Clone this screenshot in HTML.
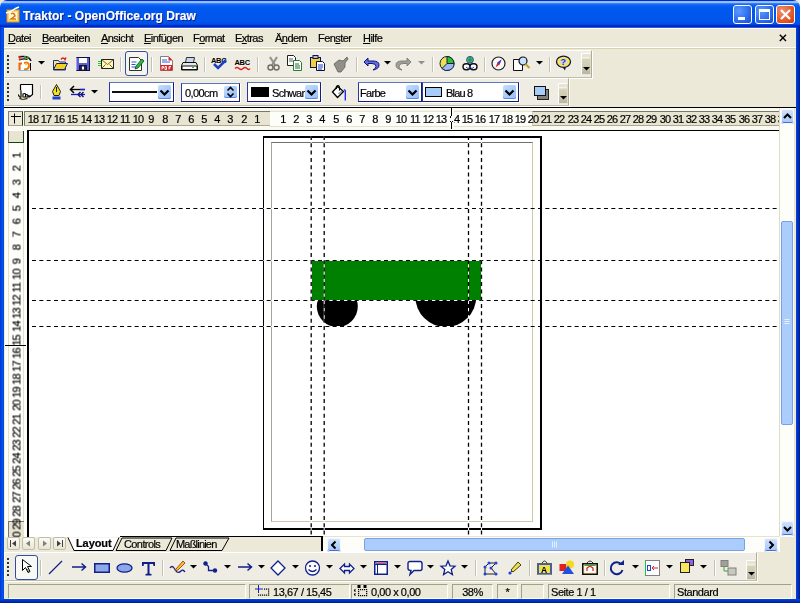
<!DOCTYPE html><html><head><meta charset="utf-8"><style>
html,body{margin:0;padding:0}
body{width:800px;height:603px;overflow:hidden;position:relative;background:#ECE9D8;font-family:"Liberation Sans",sans-serif;font-size:11px;color:#000}
.a{position:absolute;box-sizing:border-box}
.t{position:absolute;white-space:nowrap;line-height:13px;font-size:11px;letter-spacing:-0.55px;-webkit-text-stroke:0.2px currentColor;will-change:transform}
svg.a{overflow:visible}
</style></head><body>

<div class="a" style="left:0px;top:0px;width:800px;height:27px;background:linear-gradient(to bottom,#0018C0 0px,#0A30D0 0.8px,#8CC0FF 1.5px,#A8D2FF 2.3px,#3A84FA 3.3px,#0A60F2 5px,#0058EE 8px,#0055EC 20px,#0050E6 24px,#0030D0 25.5px,#0018C0 27px);border-radius:7px 7px 0 0"></div>
<div class="a" style="left:0px;top:27px;width:4px;height:576px;background:linear-gradient(to right,#0030D0,#0055EA 2px,#0048E0 4px)"></div>
<div class="a" style="left:796px;top:27px;width:4px;height:576px;background:linear-gradient(to right,#0048E0,#0030C0 2px,#001A90 4px)"></div>
<div class="a" style="left:0px;top:599px;width:800px;height:4px;background:linear-gradient(to bottom,#0048E0,#0030C0 2px,#001A90 4px)"></div>
<svg class="a" style="left:6px;top:7px;" width="14" height="15" viewBox="0 0 14 15"><rect x="1" y="3" width="12" height="12" fill="#F8D860" stroke="#E09020"/><rect x="3" y="5" width="8" height="8" fill="#FFF8E0"/><path d="M5 7 q3 -2 4 2 l-4 3 h5" stroke="#E07010" stroke-width="1.5" fill="none"/><path d="M0 6 q4 -1 7 -3 q3 -2 6 -3" stroke="#fff" stroke-width="1.5" fill="none"/></svg>
<div class="t" style="left:23px;top:10px;font-size:12px;font-weight:bold;color:#fff;letter-spacing:0.05px;text-shadow:1px 1px 0 #0A1E8C">Traktor - OpenOffice.org Draw</div>
<div class="a" style="left:733px;top:5px;width:19px;height:19px;border:1px solid #fff;border-radius:3px;background:radial-gradient(circle at 30% 30%,#5A9AFF,#2663E8 70%,#1E50D0)"><div class="a" style="left:4px;top:11px;width:7px;height:3px;background:#fff"></div></div>
<div class="a" style="left:755px;top:5px;width:19px;height:19px;border:1px solid #fff;border-radius:3px;background:radial-gradient(circle at 30% 30%,#5A9AFF,#2663E8 70%,#1E50D0)"><div class="a" style="left:3px;top:3px;width:11px;height:11px;border:1px solid #fff;border-top-width:3px"></div></div>
<div class="a" style="left:776px;top:5px;width:19px;height:19px;border:1px solid #fff;border-radius:3px;background:radial-gradient(circle at 30% 30%,#F09070,#E0501E 70%,#C83A10)"><svg class="a" style="left:3px;top:3px" width="11" height="11"><path d="M1 1L10 10M10 1L1 10" stroke="#fff" stroke-width="2.2"/></svg></div>
<div class="a" style="left:4px;top:27px;width:792px;height:1px;background:#3060D8"></div>
<div class="a" style="left:4px;top:28px;width:792px;height:1px;background:#fff"></div>
<div class="a" style="left:4px;top:47px;width:792px;height:1px;background:#fff"></div>
<div class="a" style="left:4px;top:48px;width:792px;height:1px;background:#D8D2B0"></div>
<div class="t" style="left:8px;top:32px;"><u>D</u>atei</div>
<div class="t" style="left:42px;top:32px;"><u>B</u>earbeiten</div>
<div class="t" style="left:101px;top:32px;"><u>A</u>nsicht</div>
<div class="t" style="left:144px;top:32px;"><u>E</u>infügen</div>
<div class="t" style="left:193px;top:32px;">F<u>o</u>rmat</div>
<div class="t" style="left:235px;top:32px;">E<u>x</u>tras</div>
<div class="t" style="left:275px;top:32px;">Ä<u>n</u>dern</div>
<div class="t" style="left:318px;top:32px;">Fen<u>s</u>ter</div>
<div class="t" style="left:363px;top:32px;"><u>H</u>ilfe</div>
<svg class="a" style="left:778px;top:33px;" width="10" height="10" viewBox="0 0 10 10"><path d="M1.8 1.8L8 8M8 1.8L1.8 8" stroke="#000" stroke-width="1.4"/></svg>
<div class="a" style="left:4px;top:50px;width:588px;height:28px;background:#EFEDE3;border-top:1px solid #fff;border-left:1px solid #fff;border-right:1px solid #B0AC98;border-bottom:1px solid #C0BCA8;box-shadow:1px 1px 0 #fff"></div>
<div class="a" style="left:4px;top:78px;width:565px;height:28px;background:#EFEDE3;border-top:1px solid #fff;border-left:1px solid #fff;border-right:1px solid #B0AC98;border-bottom:1px solid #C0BCA8;box-shadow:1px 1px 0 #fff"></div>
<div class="a" style="left:4px;top:107px;width:792px;height:1px;background:#000"></div>
<div class="a" style="left:7px;top:55px;width:2px;height:2px;background:#2A3A20"></div>
<div class="a" style="left:7px;top:59px;width:2px;height:2px;background:#2A3A20"></div>
<div class="a" style="left:7px;top:63px;width:2px;height:2px;background:#2A3A20"></div>
<div class="a" style="left:7px;top:67px;width:2px;height:2px;background:#2A3A20"></div>
<div class="a" style="left:7px;top:71px;width:2px;height:2px;background:#2A3A20"></div>
<div class="a" style="left:7px;top:83px;width:2px;height:2px;background:#2A3A20"></div>
<div class="a" style="left:7px;top:87px;width:2px;height:2px;background:#2A3A20"></div>
<div class="a" style="left:7px;top:91px;width:2px;height:2px;background:#2A3A20"></div>
<div class="a" style="left:7px;top:95px;width:2px;height:2px;background:#2A3A20"></div>
<div class="a" style="left:7px;top:99px;width:2px;height:2px;background:#2A3A20"></div>
<div class="a" style="left:581px;top:53px;width:10px;height:22px;border:1px solid #fff;border-right-color:#E0DCC8;border-bottom-color:#E8E6D8;background:linear-gradient(to bottom,#E6E4D4 0,#E6E4D4 3px,#F4F2E8 3px,#F4F2E8 4px,#D8D4BC 5px,#D0CCB4 60%,#B8B4A0 100%)"></div>
<svg class="a" style="left:583px;top:67px;" width="7" height="4" viewBox="0 0 7 4"><path d="M0 0h7l-3.5 3.5z" fill="#000"/></svg>
<div class="a" style="left:558px;top:83px;width:10px;height:21px;border:1px solid #fff;border-right-color:#E0DCC8;border-bottom-color:#E8E6D8;background:linear-gradient(to bottom,#E6E4D4 0,#E6E4D4 3px,#F4F2E8 3px,#F4F2E8 4px,#D8D4BC 5px,#D0CCB4 60%,#B8B4A0 100%)"></div>
<svg class="a" style="left:560px;top:96px;" width="7" height="4" viewBox="0 0 7 4"><path d="M0 0h7l-3.5 3.5z" fill="#000"/></svg>
<svg class="a" style="left:17px;top:55px;" width="15" height="16" viewBox="0 0 15 16"><path d="M1 5.5h12.5v10h-12.5z" fill="#fff"/><path d="M13.5 8v7.5" stroke="#000" stroke-width="1"/><path d="M2.5 15V8.5h2.5" stroke="#E86A10" stroke-width="2.2" fill="none"/><path d="M7 8q5-1.5 5 2.5t-5 4" stroke="#E8800A" stroke-width="2" fill="none"/><path d="M8 9.5l2 0" stroke="#F8D020" stroke-width="1.5"/><path d="M2 1.8q6-1 9 0.7 2 1 3 3.5" stroke="#101010" stroke-width="1.5" fill="none"/><path d="M2.5 4.5q5-1.2 8 -0.2" stroke="#101010" stroke-width="1.3" fill="none"/><circle cx="2.5" cy="2" r="1.2" fill="#E02010"/><circle cx="2.8" cy="4.6" r="1.1" fill="#E02010"/><circle cx="8" cy="1.8" r="1" fill="#20A030"/><circle cx="11" cy="2.6" r="1" fill="#20A030"/><path d="M1.5 15.5h11" stroke="#90B0E0" stroke-width="1"/></svg>
<svg class="a" style="left:38px;top:61px;" width="7" height="4" viewBox="0 0 7 4"><path d="M0 0h7l-3.5 3.5z" fill="#000"/></svg>
<svg class="a" style="left:52px;top:57px;" width="16" height="14" viewBox="0 0 16 14"><path d="M1.5 3.5h5l1 1.5h6v8h-12z" fill="#F8E890" stroke="#203080"/><path d="M1.5 12.5l3-6h11l-3 6z" fill="#F0D020" stroke="#102070"/><path d="M9 2.5q2-3 4 0l1-2" stroke="#E02010" stroke-width="1.5" fill="none"/></svg>
<svg class="a" style="left:76px;top:57px;" width="14" height="14" viewBox="0 0 14 14"><rect x="0.5" y="0.5" width="13" height="13" fill="#6060D0" stroke="#101040"/><rect x="3" y="1" width="8" height="5" fill="#fff"/><rect x="3.5" y="8.5" width="7" height="5" fill="#202040" stroke="#101040"/><rect x="6" y="9.5" width="2" height="3" fill="#fff"/><path d="M0.5 0.5v13" stroke="#A0A0FF"/></svg>
<svg class="a" style="left:98px;top:59px;" width="16" height="10" viewBox="0 0 16 10"><rect x="3.5" y="0.5" width="12" height="9" fill="#FFF8C0" stroke="#202020"/><path d="M3.5 0.5l6 5 6-5M3.5 9.5l4-4M15.5 9.5l-4-4" stroke="#806020" fill="none"/><path d="M0 2.5h3M0 4.5h3M0 6.5h3" stroke="#20D020"/></svg>
<div class="a" style="left:120px;top:57px;width:1px;height:15px;background:#C5C2B2"></div>
<div class="a" style="left:121px;top:57px;width:1px;height:15px;background:#fff"></div>
<div class="a" style="left:125px;top:51px;width:23px;height:25px;border:1px solid #2F4F9F;border-radius:3px;background:#F5F4EE"></div>
<svg class="a" style="left:128px;top:56px;" width="16" height="16" viewBox="0 0 16 16"><path d="M1.5 1.5h9l3 3v10h-12z" fill="#fff" stroke="#303030"/><path d="M3.5 6h5M3.5 8.5h4M3.5 11h4" stroke="#3050C0"/><path d="M7 13l1-3 6-7 2 2-6 7z" fill="#20C040" stroke="#104010" stroke-width="0.8"/></svg>
<div class="a" style="left:151px;top:57px;width:1px;height:15px;background:#C5C2B2"></div>
<div class="a" style="left:152px;top:57px;width:1px;height:15px;background:#fff"></div>
<svg class="a" style="left:160px;top:56px;" width="13" height="15" viewBox="0 0 13 15"><path d="M0.5 0.5h8l4 4v10h-12z" fill="#fff" stroke="#808080"/><path d="M8.5 0.5v4h4" fill="#E02020"/><path d="M2 4h5M2 6h8" stroke="#3060E0"/><rect x="0.5" y="9" width="12" height="5.5" fill="#D82020"/><path d="M2 10.5v3M2 10.5h1.5v1.5h-1.5M5 10.5v3h1.5v-3zM9 10.5h2M9 10.5v3M9 12h1.5" stroke="#fff" stroke-width="0.9" fill="none"/></svg>
<svg class="a" style="left:181px;top:57px;" width="17" height="14" viewBox="0 0 17 14"><path d="M5.5 0.5h8l-1 5h-8z" fill="#C8D8F0" stroke="#303030"/><path d="M2 5.5h13l1.5 3v4.5h-16v-4.5z" fill="#E8E8E8" stroke="#101010"/><rect x="1" y="9" width="15" height="3.5" fill="#fff" stroke="#101010"/><rect x="11" y="10" width="2" height="1" fill="#20C020"/></svg>
<div class="a" style="left:204px;top:57px;width:1px;height:15px;background:#C5C2B2"></div>
<div class="a" style="left:205px;top:57px;width:1px;height:15px;background:#fff"></div>
<svg class="a" style="left:211px;top:56px;" width="16" height="14" viewBox="0 0 16 14"><text x="0" y="6.5" font-family="Liberation Sans" font-weight="bold" font-size="7.5" fill="#000" letter-spacing="-0.3">ABC</text><path d="M3 8l4 4 8-8" stroke="#2040C0" stroke-width="2.5" fill="none"/></svg>
<svg class="a" style="left:234px;top:58px;" width="16" height="12" viewBox="0 0 16 12"><text x="0.5" y="7" font-family="Liberation Sans" font-weight="bold" font-size="7.5" fill="#000" letter-spacing="-0.3">ABC</text><path d="M1 10.5q2-2 4 0t4 0 4 0 3 0" stroke="#E02020" stroke-width="1.3" fill="none"/></svg>
<div class="a" style="left:257px;top:57px;width:1px;height:15px;background:#C5C2B2"></div>
<div class="a" style="left:258px;top:57px;width:1px;height:15px;background:#fff"></div>
<svg class="a" style="left:267px;top:56px;" width="13" height="15" viewBox="0 0 13 15"><path d="M3 1l5 8M10 1l-5 8" stroke="#909088" stroke-width="2"/><circle cx="3.5" cy="11.5" r="2.5" fill="none" stroke="#707068" stroke-width="1.5"/><circle cx="9.5" cy="11.5" r="2.5" fill="none" stroke="#707068" stroke-width="1.5"/></svg>
<svg class="a" style="left:287px;top:55px;" width="16" height="16" viewBox="0 0 16 16"><path d="M0.5 0.5h6l2 2v8h-8z" fill="#fff" stroke="#202020"/><path d="M2 4h4M2 6h4" stroke="#606060"/><path d="M6.5 5.5h6l2 2v8h-8z" fill="#fff" stroke="#208030"/><path d="M8 9h4M8 11h5M8 13h5" stroke="#306040"/></svg>
<svg class="a" style="left:310px;top:55px;" width="16" height="16" viewBox="0 0 16 16"><rect x="0.5" y="2.5" width="10" height="10" fill="#F0D040" stroke="#101060"/><rect x="3" y="0.5" width="5" height="3" fill="#C0C0C0" stroke="#101060"/><path d="M6.5 6.5h6l2 2v7h-8z" fill="#fff" stroke="#101030"/><path d="M8 10h5M8 12h5M8 14h4" stroke="#2040C0"/></svg>
<svg class="a" style="left:333px;top:56px;" width="16" height="15" viewBox="0 0 16 15"><path d="M1 8l5-4 4 1 4-4 1 2-3 4 0 4-4 5-3 0z" fill="#909088" stroke="#606058" stroke-width="0.8"/></svg>
<div class="a" style="left:356px;top:57px;width:1px;height:15px;background:#C5C2B2"></div>
<div class="a" style="left:357px;top:57px;width:1px;height:15px;background:#fff"></div>
<svg class="a" style="left:363px;top:57px;" width="16" height="13" viewBox="0 0 16 13"><path d="M5 1l-4 4 4 4v-2.5h4q4 0 4 3 0 2-3 3.5 6-1 6-5 0-4-6-4h-5z" fill="#6070E0" stroke="#101080" stroke-width="1"/></svg>
<svg class="a" style="left:384px;top:61px;" width="7" height="4" viewBox="0 0 7 4"><path d="M0 0h7l-3.5 3.5z" fill="#000"/></svg>
<svg class="a" style="left:396px;top:57px;" width="16" height="13" viewBox="0 0 16 13"><path d="M11 1l4 4-4 4v-2.5h-4q-4 0-4 3 0 2 3 3.5-6-1-6-5 0-4 6-4h5z" fill="#A0A098" stroke="#808078" stroke-width="1"/></svg>
<svg class="a" style="left:418px;top:61px;" width="7" height="4" viewBox="0 0 7 4"><path d="M0 0h7l-3.5 3.5z" fill="#909088"/></svg>
<div class="a" style="left:432px;top:57px;width:1px;height:15px;background:#C5C2B2"></div>
<div class="a" style="left:433px;top:57px;width:1px;height:15px;background:#fff"></div>
<svg class="a" style="left:439px;top:56px;" width="16" height="15" viewBox="0 0 16 15"><circle cx="8" cy="7.5" r="7" fill="#F0E050" stroke="#102040"/><path d="M8 7.5V0.5A7 7 0 0 1 15 7.5z" fill="#30C030" stroke="#102040"/><path d="M8 7.5h7A7 7 0 0 1 3 12.5z" fill="#A0B8F0" stroke="#102040"/></svg>
<svg class="a" style="left:462px;top:56px;" width="16" height="15" viewBox="0 0 16 15"><circle cx="8" cy="3.8" r="3.4" fill="#40C040" stroke="#3050B0"/><path d="M6 3.8h4M8 1v5.5" stroke="#3050B0" stroke-width="0.6"/><rect x="1" y="7.8" width="7" height="6" rx="3" fill="#fff" stroke="#101010" stroke-width="1.4"/><rect x="8" y="7.8" width="7" height="6" rx="3" fill="#fff" stroke="#101010" stroke-width="1.4"/><path d="M4 11l2 1.5 2-1.5 2 1.5 2-1.5" stroke="#2040C0" fill="none"/></svg>
<div class="a" style="left:484px;top:57px;width:1px;height:15px;background:#C5C2B2"></div>
<div class="a" style="left:485px;top:57px;width:1px;height:15px;background:#fff"></div>
<svg class="a" style="left:491px;top:56px;" width="15" height="15" viewBox="0 0 15 15"><circle cx="7.5" cy="7.5" r="6.5" fill="#F8F8F8" stroke="#202020" stroke-width="1.2"/><path d="M10.5 3.5l-2 5-4 3 2-5z" fill="#E02020"/><path d="M10.5 3.5l-4 3 2 2z" fill="#2040E0"/></svg>
<svg class="a" style="left:513px;top:56px;" width="17" height="15" viewBox="0 0 17 15"><path d="M0.5 3.5h6l3 3v8h-9z" fill="#fff" stroke="#101010"/><circle cx="10" cy="5" r="4" fill="#C8E0FF" stroke="#101010" stroke-width="1.2"/><path d="M12.5 8l4 4" stroke="#C0A020" stroke-width="2"/></svg>
<svg class="a" style="left:536px;top:61px;" width="7" height="4" viewBox="0 0 7 4"><path d="M0 0h7l-3.5 3.5z" fill="#000"/></svg>
<div class="a" style="left:549px;top:57px;width:1px;height:15px;background:#C5C2B2"></div>
<div class="a" style="left:550px;top:57px;width:1px;height:15px;background:#fff"></div>
<svg class="a" style="left:555px;top:55px;" width="17" height="17" viewBox="0 0 17 17"><ellipse cx="8.5" cy="6.5" rx="7.5" ry="6" fill="#fff" opacity="0.7"/><path d="M7 11.5l3 4 1-4z" fill="#101050"/><ellipse cx="8.5" cy="6.8" rx="7" ry="5.6" fill="#FFF020" stroke="#101060" stroke-width="1.3"/><ellipse cx="8.5" cy="6.8" rx="4.6" ry="3.6" fill="#DCD8CC"/><text x="5.6" y="10.3" font-family="Liberation Sans" font-weight="bold" font-size="9" fill="#1030D0">?</text></svg>
<svg class="a" style="left:17px;top:83px;" width="17" height="17" viewBox="0 0 17 17"><path d="M3.5 1.5h12v10l-3 2.5h-6" fill="#fff" stroke="#000" stroke-width="1.2"/><path d="M3.5 1.5v6" stroke="#000" stroke-width="1.2"/><path d="M4 7.5v7M4 14.5q-2.5-0.5-2.5-3M6 14.5v-3.5q1.5-1 2.5 0v3M8.5 12q1.5-1 2.5 0.5v1.5M11 13q1.5-0.5 2.5 0.5" stroke="#000" stroke-width="1.1" fill="none"/><path d="M2.5 15.5q3 1.5 8 0" stroke="#000" stroke-width="1.1" fill="none"/><path d="M5 15.5h2" stroke="#F0D020" stroke-width="1.2"/></svg>
<div class="a" style="left:40px;top:85px;width:1px;height:14px;background:#C5C2B2"></div>
<div class="a" style="left:41px;top:85px;width:1px;height:14px;background:#fff"></div>
<svg class="a" style="left:51px;top:84px;" width="11" height="16" viewBox="0 0 11 16"><path d="M5.5 0.5l4 7-1.5 4h-5l-1.5-4z" fill="#F0E020" stroke="#202020"/><path d="M5.5 3v5" stroke="#202020"/><rect x="1.5" y="12.5" width="8" height="3" fill="#2040D0"/></svg>
<svg class="a" style="left:69px;top:85px;" width="17" height="13" viewBox="0 0 17 13"><path d="M2 4.5h14" stroke="#000" stroke-width="1.3"/><path d="M11 4.5h5" stroke="#1020D0" stroke-width="1.3"/><path d="M5 1l-3.5 3.5 3.5 3.5" stroke="#000" stroke-width="1.5" fill="none"/><path d="M2 9.5h14" stroke="#1020C0" stroke-width="1.3"/><path d="M14.5 7l-2.5 2.5 2.5 2.5M11.5 7l-2.5 2.5 2.5 2.5" stroke="#101080" stroke-width="1.4" fill="none"/></svg>
<svg class="a" style="left:91px;top:90px;" width="7" height="4" viewBox="0 0 7 4"><path d="M0 0h7l-3.5 3.5z" fill="#000"/></svg>
<div class="a" style="left:109px;top:82px;width:65px;height:20px;border:1px solid #141C80;border-top-color:#5878C0;border-left-color:#2838A0;background:#fff;box-shadow:1px 1px 0 #fff"></div>
<div class="a" style="left:158px;top:85px;width:13px;height:14px;border-radius:2px;background:linear-gradient(135deg,#C8DEFE,#A8CCFC 50%,#9CC0F8);box-shadow:inset 0 -1px 0 #5A88E8"></div>
<svg class="a" style="left:158px;top:85px;" width="13" height="14" viewBox="0 0 13 14"><path d="M2.5 5.5l4 4 4-4" stroke="#000" stroke-width="2.2" fill="none"/></svg>
<div class="a" style="left:112px;top:91px;width:45px;height:2px;background:#101010"></div>
<div class="a" style="left:181px;top:83px;width:59px;height:19px;border:1px solid #141C80;border-top-color:#5878C0;border-left-color:#2838A0;background:#fff;box-shadow:1px 1px 0 #fff"></div>
<div class="a" style="left:224px;top:86px;width:13px;height:12px;border-radius:2px;background:linear-gradient(135deg,#C8DEFE,#A8CCFC 50%,#9CC0F8);box-shadow:inset 0 -1px 0 #5A88E8"></div>
<svg class="a" style="left:224px;top:86px;" width="13" height="12" viewBox="0 0 13 12"><path d="M3.5 4.5l3-3 3 3M3.5 7.5l3 3 3-3" stroke="#000" stroke-width="1.6" fill="none"/></svg>
<div class="t" style="left:185px;top:87px;letter-spacing:-0.6px">0,00cm</div>
<div class="a" style="left:247px;top:82px;width:74px;height:20px;border:1px solid #141C80;border-top-color:#5878C0;border-left-color:#2838A0;background:#fff;box-shadow:1px 1px 0 #fff"></div>
<div class="a" style="left:305px;top:85px;width:13px;height:14px;border-radius:2px;background:linear-gradient(135deg,#C8DEFE,#A8CCFC 50%,#9CC0F8);box-shadow:inset 0 -1px 0 #5A88E8"></div>
<svg class="a" style="left:305px;top:85px;" width="13" height="14" viewBox="0 0 13 14"><path d="M2.5 5.5l4 4 4-4" stroke="#000" stroke-width="2.2" fill="none"/></svg>
<div class="a" style="left:251px;top:87px;width:18px;height:10px;background:#000"></div>
<div class="t" style="left:272px;top:87px;letter-spacing:-0.7px">Schwar</div>
<svg class="a" style="left:331px;top:83px;" width="17" height="17" viewBox="0 0 17 17"><path d="M1.5 9L6.5 3.5 12.5 8.5 6.5 14.5Z" fill="#fff" stroke="#000" stroke-width="1.3"/><path d="M7.5 11l3.5-3" stroke="#90A0B0" stroke-width="1.5"/><path d="M5.5 6q-1-3 1.5-3.5 2-0.3 1.5 5" stroke="#000" stroke-width="1.1" fill="none"/><path d="M13 6.5l1.3 1v10" stroke="#2030F0" stroke-width="1.4" fill="none"/></svg>
<div class="a" style="left:358px;top:82px;width:64px;height:20px;border:1px solid #141C80;border-top-color:#5878C0;border-left-color:#2838A0;background:#fff;box-shadow:1px 1px 0 #fff"></div>
<div class="a" style="left:406px;top:85px;width:13px;height:14px;border-radius:2px;background:linear-gradient(135deg,#C8DEFE,#A8CCFC 50%,#9CC0F8);box-shadow:inset 0 -1px 0 #5A88E8"></div>
<svg class="a" style="left:406px;top:85px;" width="13" height="14" viewBox="0 0 13 14"><path d="M2.5 5.5l4 4 4-4" stroke="#000" stroke-width="2.2" fill="none"/></svg>
<div class="t" style="left:360px;top:87px;letter-spacing:-0.7px">Farbe</div>
<div class="a" style="left:422px;top:82px;width:97px;height:20px;border:1px solid #141C80;border-top-color:#5878C0;border-left-color:#2838A0;background:#fff;box-shadow:1px 1px 0 #fff"></div>
<div class="a" style="left:503px;top:85px;width:13px;height:14px;border-radius:2px;background:linear-gradient(135deg,#C8DEFE,#A8CCFC 50%,#9CC0F8);box-shadow:inset 0 -1px 0 #5A88E8"></div>
<svg class="a" style="left:503px;top:85px;" width="13" height="14" viewBox="0 0 13 14"><path d="M2.5 5.5l4 4 4-4" stroke="#000" stroke-width="2.2" fill="none"/></svg>
<div class="a" style="left:425px;top:87px;width:17px;height:10px;background:#A8CCF8;border:1px solid #000"></div>
<div class="t" style="left:446px;top:87px;letter-spacing:-0.8px">Blau 8</div>
<svg class="a" style="left:534px;top:86px;" width="15" height="14" viewBox="0 0 15 14"><rect x="3.5" y="3.5" width="11" height="10" fill="#808078" stroke="#202020"/><rect x="0.5" y="0.5" width="11" height="9" fill="#A8CCF8" stroke="#101010"/></svg>
<div class="a" style="left:4px;top:108px;width:776px;height:22px;background:#FAF9F2"></div>
<div class="a" style="left:8px;top:111px;width:15px;height:15px;background:#ECE9D8;border:1px solid #808080;border-right-color:#1A3A1A;border-bottom-color:#A8A090"></div>
<svg class="a" style="left:8px;top:111px;" width="15" height="15" viewBox="0 0 15 15"><path d="M3 5.5h10M6.5 2.5v10" stroke="#000" stroke-width="1"/></svg>
<div class="a" style="left:24px;top:111px;width:246px;height:15px;background:#E8E4D2;border-top:1px solid #7A7868;border-left:1px solid #7A7868;border-bottom:1px solid #B0A890"></div>
<div class="a" style="left:270px;top:110px;width:262px;height:17px;background:#FDFDFA;border-top:1px solid #F6F4EC"></div>
<div class="a" style="left:270px;top:111px;width:262px;height:1px;background:#E6E2CC"></div>
<div class="a" style="left:270px;top:126px;width:262px;height:1px;background:#E6E2CC"></div>
<div class="a" style="left:532px;top:111px;width:247px;height:15px;background:#E8E4D2;border-top:1px solid #7A7868;border-bottom:1px solid #B0A890;border-left:1px solid #D8D4C0"></div>
<div class="a" style="left:24px;top:111px;width:755px;height:15px;overflow:hidden">
<div class="t" style="left:212.6px;top:2px;width:40px;text-align:center;letter-spacing:-0.8px">1</div>
<div class="t" style="left:199.5px;top:2px;width:40px;text-align:center;letter-spacing:-0.8px">2</div>
<div class="t" style="left:186.3px;top:2px;width:40px;text-align:center;letter-spacing:-0.8px">3</div>
<div class="t" style="left:173.2px;top:2px;width:40px;text-align:center;letter-spacing:-0.8px">4</div>
<div class="t" style="left:160.0px;top:2px;width:40px;text-align:center;letter-spacing:-0.8px">5</div>
<div class="t" style="left:146.8px;top:2px;width:40px;text-align:center;letter-spacing:-0.8px">6</div>
<div class="t" style="left:133.7px;top:2px;width:40px;text-align:center;letter-spacing:-0.8px">7</div>
<div class="t" style="left:120.5px;top:2px;width:40px;text-align:center;letter-spacing:-0.8px">8</div>
<div class="t" style="left:107.4px;top:2px;width:40px;text-align:center;letter-spacing:-0.8px">9</div>
<div class="t" style="left:94.2px;top:2px;width:40px;text-align:center;letter-spacing:-0.8px">10</div>
<div class="t" style="left:81.0px;top:2px;width:40px;text-align:center;letter-spacing:-0.8px">11</div>
<div class="t" style="left:67.9px;top:2px;width:40px;text-align:center;letter-spacing:-0.8px">12</div>
<div class="t" style="left:54.7px;top:2px;width:40px;text-align:center;letter-spacing:-0.8px">13</div>
<div class="t" style="left:41.6px;top:2px;width:40px;text-align:center;letter-spacing:-0.8px">14</div>
<div class="t" style="left:28.4px;top:2px;width:40px;text-align:center;letter-spacing:-0.8px">15</div>
<div class="t" style="left:15.2px;top:2px;width:40px;text-align:center;letter-spacing:-0.8px">16</div>
<div class="t" style="left:2.1px;top:2px;width:40px;text-align:center;letter-spacing:-0.8px">17</div>
<div class="t" style="left:-11.1px;top:2px;width:40px;text-align:center;letter-spacing:-0.8px">18</div>
<div class="t" style="left:239.0px;top:2px;width:40px;text-align:center;letter-spacing:-0.8px">1</div>
<div class="t" style="left:252.1px;top:2px;width:40px;text-align:center;letter-spacing:-0.8px">2</div>
<div class="t" style="left:265.3px;top:2px;width:40px;text-align:center;letter-spacing:-0.8px">3</div>
<div class="t" style="left:278.4px;top:2px;width:40px;text-align:center;letter-spacing:-0.8px">4</div>
<div class="t" style="left:291.6px;top:2px;width:40px;text-align:center;letter-spacing:-0.8px">5</div>
<div class="t" style="left:304.8px;top:2px;width:40px;text-align:center;letter-spacing:-0.8px">6</div>
<div class="t" style="left:317.9px;top:2px;width:40px;text-align:center;letter-spacing:-0.8px">7</div>
<div class="t" style="left:331.1px;top:2px;width:40px;text-align:center;letter-spacing:-0.8px">8</div>
<div class="t" style="left:344.2px;top:2px;width:40px;text-align:center;letter-spacing:-0.8px">9</div>
<div class="t" style="left:357.4px;top:2px;width:40px;text-align:center;letter-spacing:-0.8px">10</div>
<div class="t" style="left:370.6px;top:2px;width:40px;text-align:center;letter-spacing:-0.8px">11</div>
<div class="t" style="left:383.7px;top:2px;width:40px;text-align:center;letter-spacing:-0.8px">12</div>
<div class="t" style="left:396.9px;top:2px;width:40px;text-align:center;letter-spacing:-0.8px">13</div>
<div class="t" style="left:410.0px;top:2px;width:40px;text-align:center;letter-spacing:-0.8px">14</div>
<div class="t" style="left:423.2px;top:2px;width:40px;text-align:center;letter-spacing:-0.8px">15</div>
<div class="t" style="left:436.4px;top:2px;width:40px;text-align:center;letter-spacing:-0.8px">16</div>
<div class="t" style="left:449.5px;top:2px;width:40px;text-align:center;letter-spacing:-0.8px">17</div>
<div class="t" style="left:462.7px;top:2px;width:40px;text-align:center;letter-spacing:-0.8px">18</div>
<div class="t" style="left:475.8px;top:2px;width:40px;text-align:center;letter-spacing:-0.8px">19</div>
<div class="t" style="left:489.0px;top:2px;width:40px;text-align:center;letter-spacing:-0.8px">20</div>
<div class="t" style="left:502.2px;top:2px;width:40px;text-align:center;letter-spacing:-0.8px">21</div>
<div class="t" style="left:515.3px;top:2px;width:40px;text-align:center;letter-spacing:-0.8px">22</div>
<div class="t" style="left:528.5px;top:2px;width:40px;text-align:center;letter-spacing:-0.8px">23</div>
<div class="t" style="left:541.6px;top:2px;width:40px;text-align:center;letter-spacing:-0.8px">24</div>
<div class="t" style="left:554.8px;top:2px;width:40px;text-align:center;letter-spacing:-0.8px">25</div>
<div class="t" style="left:568.0px;top:2px;width:40px;text-align:center;letter-spacing:-0.8px">26</div>
<div class="t" style="left:581.1px;top:2px;width:40px;text-align:center;letter-spacing:-0.8px">27</div>
<div class="t" style="left:594.3px;top:2px;width:40px;text-align:center;letter-spacing:-0.8px">28</div>
<div class="t" style="left:607.4px;top:2px;width:40px;text-align:center;letter-spacing:-0.8px">29</div>
<div class="t" style="left:620.6px;top:2px;width:40px;text-align:center;letter-spacing:-0.8px">30</div>
<div class="t" style="left:633.8px;top:2px;width:40px;text-align:center;letter-spacing:-0.8px">31</div>
<div class="t" style="left:646.9px;top:2px;width:40px;text-align:center;letter-spacing:-0.8px">32</div>
<div class="t" style="left:660.1px;top:2px;width:40px;text-align:center;letter-spacing:-0.8px">33</div>
<div class="t" style="left:673.2px;top:2px;width:40px;text-align:center;letter-spacing:-0.8px">34</div>
<div class="t" style="left:686.4px;top:2px;width:40px;text-align:center;letter-spacing:-0.8px">35</div>
<div class="t" style="left:699.6px;top:2px;width:40px;text-align:center;letter-spacing:-0.8px">36</div>
<div class="t" style="left:712.7px;top:2px;width:40px;text-align:center;letter-spacing:-0.8px">37</div>
<div class="t" style="left:725.9px;top:2px;width:40px;text-align:center;letter-spacing:-0.8px">38</div>
<div class="t" style="left:739.0px;top:2px;width:40px;text-align:center;letter-spacing:-0.8px">39</div>
</div>
<div class="a" style="left:449px;top:110px;width:5px;height:17px;background:#FDFDFA"></div>
<div class="a" style="left:451px;top:108px;width:1px;height:8px;background:#000"></div>
<div class="a" style="left:451px;top:122px;width:1px;height:7px;background:#000"></div>
<div class="a" style="left:450px;top:116px;width:1px;height:2px;background:#000"></div>
<div class="a" style="left:450px;top:121px;width:1px;height:1px;background:#000"></div>
<div class="a" style="left:452px;top:121px;width:1px;height:1px;background:#000"></div>
<div class="a" style="left:5px;top:130px;width:22px;height:407px;background:#FDFDFA"></div>
<div class="a" style="left:8px;top:142px;width:1px;height:379px;background:#E4E0C8"></div>
<div class="a" style="left:23px;top:142px;width:1px;height:379px;background:#E4E0C8"></div>
<div class="a" style="left:8px;top:131px;width:16px;height:12px;background:#E8E4D2;border-left:1px solid #707068;border-bottom:1px solid #1A401A;border-right:1px solid #1A401A"></div>
<div class="a" style="left:8px;top:521px;width:16px;height:16px;background:#E8E4D2;border-left:1px solid #7A7868;border-top:1px solid #7A7868"></div>
<div class="a" style="left:8px;top:130px;width:16px;height:407px;overflow:hidden">
<div class="t" style="left:-11px;top:19.3px;width:40px;text-align:center;letter-spacing:-0.8px;transform:rotate(-90deg)">1</div>
<div class="t" style="left:-11px;top:32.4px;width:40px;text-align:center;letter-spacing:-0.8px;transform:rotate(-90deg)">2</div>
<div class="t" style="left:-11px;top:45.6px;width:40px;text-align:center;letter-spacing:-0.8px;transform:rotate(-90deg)">3</div>
<div class="t" style="left:-11px;top:58.7px;width:40px;text-align:center;letter-spacing:-0.8px;transform:rotate(-90deg)">4</div>
<div class="t" style="left:-11px;top:71.9px;width:40px;text-align:center;letter-spacing:-0.8px;transform:rotate(-90deg)">5</div>
<div class="t" style="left:-11px;top:85.1px;width:40px;text-align:center;letter-spacing:-0.8px;transform:rotate(-90deg)">6</div>
<div class="t" style="left:-11px;top:98.2px;width:40px;text-align:center;letter-spacing:-0.8px;transform:rotate(-90deg)">7</div>
<div class="t" style="left:-11px;top:111.4px;width:40px;text-align:center;letter-spacing:-0.8px;transform:rotate(-90deg)">8</div>
<div class="t" style="left:-11px;top:124.5px;width:40px;text-align:center;letter-spacing:-0.8px;transform:rotate(-90deg)">9</div>
<div class="t" style="left:-11px;top:137.7px;width:40px;text-align:center;letter-spacing:-0.8px;transform:rotate(-90deg)">10</div>
<div class="t" style="left:-11px;top:150.9px;width:40px;text-align:center;letter-spacing:-0.8px;transform:rotate(-90deg)">11</div>
<div class="t" style="left:-11px;top:164.0px;width:40px;text-align:center;letter-spacing:-0.8px;transform:rotate(-90deg)">12</div>
<div class="t" style="left:-11px;top:177.2px;width:40px;text-align:center;letter-spacing:-0.8px;transform:rotate(-90deg)">13</div>
<div class="t" style="left:-11px;top:190.3px;width:40px;text-align:center;letter-spacing:-0.8px;transform:rotate(-90deg)">14</div>
<div class="t" style="left:-11px;top:203.5px;width:40px;text-align:center;letter-spacing:-0.8px;transform:rotate(-90deg)">15</div>
<div class="t" style="left:-11px;top:216.7px;width:40px;text-align:center;letter-spacing:-0.8px;transform:rotate(-90deg)">16</div>
<div class="t" style="left:-11px;top:229.8px;width:40px;text-align:center;letter-spacing:-0.8px;transform:rotate(-90deg)">17</div>
<div class="t" style="left:-11px;top:243.0px;width:40px;text-align:center;letter-spacing:-0.8px;transform:rotate(-90deg)">18</div>
<div class="t" style="left:-11px;top:256.1px;width:40px;text-align:center;letter-spacing:-0.8px;transform:rotate(-90deg)">19</div>
<div class="t" style="left:-11px;top:269.3px;width:40px;text-align:center;letter-spacing:-0.8px;transform:rotate(-90deg)">20</div>
<div class="t" style="left:-11px;top:282.5px;width:40px;text-align:center;letter-spacing:-0.8px;transform:rotate(-90deg)">21</div>
<div class="t" style="left:-11px;top:295.6px;width:40px;text-align:center;letter-spacing:-0.8px;transform:rotate(-90deg)">22</div>
<div class="t" style="left:-11px;top:308.8px;width:40px;text-align:center;letter-spacing:-0.8px;transform:rotate(-90deg)">23</div>
<div class="t" style="left:-11px;top:321.9px;width:40px;text-align:center;letter-spacing:-0.8px;transform:rotate(-90deg)">24</div>
<div class="t" style="left:-11px;top:335.1px;width:40px;text-align:center;letter-spacing:-0.8px;transform:rotate(-90deg)">25</div>
<div class="t" style="left:-11px;top:348.3px;width:40px;text-align:center;letter-spacing:-0.8px;transform:rotate(-90deg)">26</div>
<div class="t" style="left:-11px;top:361.4px;width:40px;text-align:center;letter-spacing:-0.8px;transform:rotate(-90deg)">27</div>
<div class="t" style="left:-11px;top:374.6px;width:40px;text-align:center;letter-spacing:-0.8px;transform:rotate(-90deg)">28</div>
<div class="t" style="left:-11px;top:387.7px;width:40px;text-align:center;letter-spacing:-0.8px;transform:rotate(-90deg)">29</div>
<div class="t" style="left:-11px;top:400.9px;width:40px;text-align:center;letter-spacing:-0.8px;transform:rotate(-90deg)">30</div>
</div>
<div class="a" style="left:5px;top:345px;width:21px;height:1px;background:#000"></div>
<div class="a" style="left:27px;top:130px;width:753px;height:407px;background:#FFFFFF;border-top:1px solid #000;border-left:2px solid #000"></div>
<div class="a" style="left:263px;top:136px;width:279px;height:394px;border:1px solid #000;border-right-width:2px;border-bottom-width:2px;border-top-width:2px"></div>
<div class="a" style="left:271px;top:142px;width:262px;height:380px;border:1px solid #D0C8A8;border-top-color:#707070;border-left-color:#A8A498"></div>
<svg class="a" style="left:27px;top:130px;" width="753" height="407" viewBox="0 0 753 407"><circle cx="310.3" cy="176.5" r="20.5" fill="#000"/><circle cx="418.8" cy="166.5" r="30.5" fill="#000"/><rect x="285" y="130.8" width="169" height="39.2" fill="#008000"/></svg>
<svg class="a" style="left:27px;top:130px;" width="753" height="407" viewBox="0 0 753 407"><line x1="5" y1="78.5" x2="750" y2="78.5" stroke="#fff" stroke-width="1"/><line x1="5" y1="78.5" x2="750" y2="78.5" stroke="#000" stroke-width="1.1" stroke-dasharray="4 3.333"/><line x1="5" y1="130.5" x2="750" y2="130.5" stroke="#fff" stroke-width="1"/><line x1="5" y1="130.5" x2="750" y2="130.5" stroke="#000" stroke-width="1.1" stroke-dasharray="4 3.333"/><line x1="5" y1="170.5" x2="750" y2="170.5" stroke="#fff" stroke-width="1"/><line x1="5" y1="170.5" x2="750" y2="170.5" stroke="#000" stroke-width="1.1" stroke-dasharray="4 3.333"/><line x1="5" y1="196.5" x2="750" y2="196.5" stroke="#fff" stroke-width="1"/><line x1="5" y1="196.5" x2="750" y2="196.5" stroke="#000" stroke-width="1.1" stroke-dasharray="4 3.333"/><line x1="284.2" y1="6" x2="284.2" y2="404.5" stroke="#fff" stroke-width="1"/><line x1="284.2" y1="6" x2="284.2" y2="404.5" stroke="#000" stroke-width="1.3" stroke-dasharray="4 3.306"/><line x1="297.2" y1="6" x2="297.2" y2="404.5" stroke="#fff" stroke-width="1"/><line x1="297.2" y1="6" x2="297.2" y2="404.5" stroke="#000" stroke-width="1.3" stroke-dasharray="4 3.306"/><line x1="441.5" y1="6" x2="441.5" y2="404.5" stroke="#fff" stroke-width="1"/><line x1="441.5" y1="6" x2="441.5" y2="404.5" stroke="#000" stroke-width="1.3" stroke-dasharray="4 3.306"/><line x1="454.5" y1="6" x2="454.5" y2="404.5" stroke="#fff" stroke-width="1"/><line x1="454.5" y1="6" x2="454.5" y2="404.5" stroke="#000" stroke-width="1.3" stroke-dasharray="4 3.306"/></svg>
<div class="a" style="left:779px;top:108px;width:1px;height:429px;background:#E0DCC0"></div>
<div class="a" style="left:780px;top:108px;width:15px;height:429px;background:#FDFDFA;border-right:1px solid #E8E4CC"></div>
<div class="a" style="left:781px;top:109px;width:13px;height:15px;border-radius:3px;background:linear-gradient(to bottom,#D2E2FE,#B4D0FB 60%,#A4C4F8);box-shadow:inset 0 0 0 1px #F4F8FF,inset 0 -2px 0 #4A6CD0"></div>
<svg class="a" style="left:781px;top:109px;" width="13" height="15" viewBox="0 0 13 15"><path d="M3 9l3.5-3.5 3.5 3.5" stroke="#000" stroke-width="2" fill="none"/></svg>
<div class="a" style="left:781px;top:521px;width:13px;height:15px;border-radius:3px;background:linear-gradient(to bottom,#D2E2FE,#B4D0FB 60%,#A4C4F8);box-shadow:inset 0 0 0 1px #F4F8FF,inset 0 -2px 0 #4A6CD0"></div>
<svg class="a" style="left:781px;top:521px;" width="13" height="15" viewBox="0 0 13 15"><path d="M3 6l3.5 3.5 3.5-3.5" stroke="#000" stroke-width="2" fill="none"/></svg>
<div class="a" style="left:781px;top:221px;width:12px;height:204px;border:1px solid #7A9EEA;border-radius:2px;background:#ABCDFC"></div>
<svg class="a" style="left:783px;top:318px;" width="8" height="8" viewBox="0 0 8 8"><path d="M1.5 1.5h5M1.5 3.5h5M1.5 5.5h5" stroke="#E8F0FF" stroke-width="1"/></svg>
<div class="a" style="left:7px;top:537px;width:13px;height:13px;border:1px solid #C0BCA8;border-radius:2px;background:linear-gradient(to bottom,#FBFBF6,#E8E4D4)"></div>
<svg class="a" style="left:7px;top:537px;" width="13" height="13" viewBox="0 0 13 13"><path d="M3.5 3v7" stroke="#404040"/><path d="M9 3.5v6l-4-3z" fill="#404040"/></svg>
<div class="a" style="left:22px;top:537px;width:13px;height:13px;border:1px solid #C0BCA8;border-radius:2px;background:linear-gradient(to bottom,#FBFBF6,#E8E4D4)"></div>
<svg class="a" style="left:22px;top:537px;" width="13" height="13" viewBox="0 0 13 13"><path d="M8 3.5v6l-4-3z" fill="#808078"/></svg>
<div class="a" style="left:38px;top:537px;width:13px;height:13px;border:1px solid #C0BCA8;border-radius:2px;background:linear-gradient(to bottom,#FBFBF6,#E8E4D4)"></div>
<svg class="a" style="left:38px;top:537px;" width="13" height="13" viewBox="0 0 13 13"><path d="M5 3.5v6l4-3z" fill="#808078"/></svg>
<div class="a" style="left:53px;top:537px;width:13px;height:13px;border:1px solid #C0BCA8;border-radius:2px;background:linear-gradient(to bottom,#FBFBF6,#E8E4D4)"></div>
<svg class="a" style="left:53px;top:537px;" width="13" height="13" viewBox="0 0 13 13"><path d="M9.5 3v7" stroke="#404040"/><path d="M4 3.5v6l4-3z" fill="#404040"/></svg>
<svg class="a" style="left:0px;top:537px;" width="240" height="15" viewBox="0 0 240 15"><path d="M122 1 L116 13.5 L166 13.5 L172 1 Z" fill="#ECE9D8" stroke="#000"/><path d="M176 1 L170 13.5 L222 13.5 L229 1 Z" fill="#ECE9D8" stroke="#000"/><path d="M68 0.5 L74 13.5 L113 13.5 L119 0.5" fill="#fff" stroke="#000"/></svg>
<div class="t" style="left:76px;top:537px;font-weight:bold;font-size:11px;letter-spacing:-0.1px">Layout</div>
<div class="t" style="left:124px;top:538px;letter-spacing:-0.6px">Controls</div>
<div class="t" style="left:176px;top:538px;letter-spacing:-0.8px">Maßlinien</div>
<div class="a" style="left:120px;top:536px;width:202px;height:1px;background:#000"></div>
<div class="a" style="left:321px;top:536px;width:2px;height:15px;background:#000"></div>
<div class="a" style="left:323px;top:536px;width:457px;height:16px;background:#FDFDFA;border-top:1px solid #E8E4CC"></div>
<div class="a" style="left:327px;top:538px;width:14px;height:14px;border-radius:3px;background:linear-gradient(to bottom,#D2E2FE,#B4D0FB 60%,#A4C4F8);box-shadow:inset 0 0 0 1px #F4F8FF,inset 0 -2px 0 #4A6CD0"></div>
<svg class="a" style="left:327px;top:538px;" width="14" height="14" viewBox="0 0 14 14"><path d="M8.5 3.5l-3.5 3.5 3.5 3.5" stroke="#000" stroke-width="2" fill="none"/></svg>
<div class="a" style="left:764px;top:538px;width:14px;height:14px;border-radius:3px;background:linear-gradient(to bottom,#D2E2FE,#B4D0FB 60%,#A4C4F8);box-shadow:inset 0 0 0 1px #F4F8FF,inset 0 -2px 0 #4A6CD0"></div>
<svg class="a" style="left:764px;top:538px;" width="14" height="14" viewBox="0 0 14 14"><path d="M5.5 3.5l3.5 3.5-3.5 3.5" stroke="#000" stroke-width="2" fill="none"/></svg>
<div class="a" style="left:364px;top:538px;width:381px;height:13px;border:1px solid #7A9EEA;border-radius:2px;background:#ABCDFC"></div>
<svg class="a" style="left:551px;top:540px;" width="8" height="9" viewBox="0 0 8 9"><path d="M1.5 1.5v6M3.5 1.5v6M5.5 1.5v6" stroke="#E8F0FF" stroke-width="1"/></svg>
<div class="a" style="left:4px;top:552px;width:753px;height:29px;background:#EFEDE3;border-top:1px solid #fff;border-left:1px solid #fff;border-right:1px solid #B0AC98;border-bottom:1px solid #C0BCA8;box-shadow:1px 1px 0 #fff"></div>
<div class="a" style="left:7px;top:558px;width:2px;height:2px;background:#2A3A20"></div>
<div class="a" style="left:7px;top:562px;width:2px;height:2px;background:#2A3A20"></div>
<div class="a" style="left:7px;top:566px;width:2px;height:2px;background:#2A3A20"></div>
<div class="a" style="left:7px;top:570px;width:2px;height:2px;background:#2A3A20"></div>
<div class="a" style="left:7px;top:574px;width:2px;height:2px;background:#2A3A20"></div>
<div class="a" style="left:746px;top:560px;width:10px;height:20px;border:1px solid #fff;border-right-color:#E0DCC8;border-bottom-color:#E8E6D8;background:linear-gradient(to bottom,#E6E4D4 0,#E6E4D4 3px,#F4F2E8 3px,#F4F2E8 4px,#D8D4BC 5px,#D0CCB4 60%,#B8B4A0 100%)"></div>
<svg class="a" style="left:748px;top:572px;" width="7" height="4" viewBox="0 0 7 4"><path d="M0 0h7l-3.5 3.5z" fill="#000"/></svg>
<div class="a" style="left:15px;top:555px;width:23px;height:25px;border:1px solid #2F4F9F;border-radius:3px;background:#F8F8F4"></div>
<svg class="a" style="left:21px;top:559px;" width="11" height="15" viewBox="0 0 11 15"><path d="M1.5 0.5v11l3-3 2.5 5 2-1-2.5-5h4z" fill="#fff" stroke="#000"/><path d="M6 10l2 3" stroke="#208020"/></svg>
<div class="a" style="left:40px;top:560px;width:1px;height:16px;background:#C5C2B2"></div>
<div class="a" style="left:41px;top:560px;width:1px;height:16px;background:#fff"></div>
<svg class="a" style="left:48px;top:560px;" width="15" height="15" viewBox="0 0 15 15"><path d="M1 14L14 1" stroke="#10208A" stroke-width="1.3"/></svg>
<svg class="a" style="left:72px;top:563px;" width="15" height="8" viewBox="0 0 15 8"><path d="M0 4h13M9.5 0.5l4 3.5-4 3.5" stroke="#10208A" stroke-width="1.5" fill="none"/></svg>
<svg class="a" style="left:94px;top:563px;" width="16" height="10" viewBox="0 0 16 10"><rect x="0.75" y="0.75" width="14.5" height="8.5" fill="#8CA8E8" stroke="#10208A" stroke-width="1.5"/></svg>
<svg class="a" style="left:116px;top:563px;" width="17" height="10" viewBox="0 0 17 10"><ellipse cx="8.5" cy="5" rx="7.5" ry="4.2" fill="#8CA8E8" stroke="#10208A" stroke-width="1.3"/></svg>
<svg class="a" style="left:141px;top:561px;" width="15" height="15" viewBox="0 0 15 15"><path d="M1 1h13v4h-1.5l-0.5-2h-3.5v9.5l2 0.5v1.5h-6v-1.5l2-0.5v-9.5h-3.5l-0.5 2h-1.5z" fill="#10208A"/></svg>
<div class="a" style="left:162px;top:560px;width:1px;height:16px;background:#C5C2B2"></div>
<div class="a" style="left:163px;top:560px;width:1px;height:16px;background:#fff"></div>
<svg class="a" style="left:169px;top:560px;" width="17" height="14" viewBox="0 0 17 14"><path d="M1 8q2-3 4 0t3 4q2 1 4-1t4 1" stroke="#10208A" stroke-width="1.3" fill="none"/><path d="M7 9l7-8 2 2-7 7-3 1z" fill="#F8C030" stroke="#A04010" stroke-width="0.9"/></svg>
<svg class="a" style="left:190px;top:565px;" width="7" height="4" viewBox="0 0 7 4"><path d="M0 0h7l-3.5 3.5z" fill="#000"/></svg>
<svg class="a" style="left:203px;top:561px;" width="15" height="12" viewBox="0 0 15 12"><circle cx="2.5" cy="2.5" r="2.2" fill="#10208A"/><circle cx="12" cy="9.5" r="2.2" fill="#10208A"/><path d="M2.5 2.5l3 3v4h6" stroke="#10208A" stroke-width="1.3" fill="none"/></svg>
<svg class="a" style="left:224px;top:565px;" width="7" height="4" viewBox="0 0 7 4"><path d="M0 0h7l-3.5 3.5z" fill="#000"/></svg>
<svg class="a" style="left:238px;top:563px;" width="15" height="8" viewBox="0 0 15 8"><path d="M0 4h13M9.5 0.5l4 3.5-4 3.5" stroke="#10208A" stroke-width="1.5" fill="none"/></svg>
<svg class="a" style="left:258px;top:565px;" width="7" height="4" viewBox="0 0 7 4"><path d="M0 0h7l-3.5 3.5z" fill="#000"/></svg>
<svg class="a" style="left:270px;top:560px;" width="16" height="16" viewBox="0 0 16 16"><path d="M8 1l7 7-7 7-7-7z" fill="#fff" stroke="#10208A" stroke-width="1.3"/></svg>
<svg class="a" style="left:292px;top:565px;" width="7" height="4" viewBox="0 0 7 4"><path d="M0 0h7l-3.5 3.5z" fill="#000"/></svg>
<svg class="a" style="left:304px;top:560px;" width="17" height="16" viewBox="0 0 17 16"><circle cx="8.5" cy="8" r="7" fill="#fff" stroke="#10208A" stroke-width="1.3"/><circle cx="6" cy="6" r="1" fill="#10208A"/><circle cx="11" cy="6" r="1" fill="#10208A"/><path d="M4.5 9.5q4 4 8 0" stroke="#10208A" stroke-width="1.2" fill="none"/></svg>
<svg class="a" style="left:326px;top:565px;" width="7" height="4" viewBox="0 0 7 4"><path d="M0 0h7l-3.5 3.5z" fill="#000"/></svg>
<svg class="a" style="left:339px;top:563px;" width="16" height="11" viewBox="0 0 16 11"><path d="M1 5.5l4.5-4.5v2.5h5v-2.5l4.5 4.5-4.5 4.5v-2.5h-5v2.5z" fill="#fff" stroke="#10208A" stroke-width="1.3"/></svg>
<svg class="a" style="left:360px;top:565px;" width="7" height="4" viewBox="0 0 7 4"><path d="M0 0h7l-3.5 3.5z" fill="#000"/></svg>
<svg class="a" style="left:374px;top:561px;" width="14" height="14" viewBox="0 0 14 14"><rect x="0.75" y="0.75" width="12.5" height="12.5" fill="#fff" stroke="#10208A" stroke-width="1.5"/><path d="M1 3.5h12M3.5 3.5v9.5" stroke="#10208A"/><path d="M2 2.5h10" stroke="#E04060"/></svg>
<svg class="a" style="left:394px;top:565px;" width="7" height="4" viewBox="0 0 7 4"><path d="M0 0h7l-3.5 3.5z" fill="#000"/></svg>
<svg class="a" style="left:407px;top:560px;" width="16" height="16" viewBox="0 0 16 16"><path d="M3 1.5h10q2 0 2 2v5q0 2-2 2h-6l-4 4 1-4q-3 0-3-2v-5q0-2 2-2z" fill="#fff" stroke="#10208A" stroke-width="1.4"/></svg>
<svg class="a" style="left:427px;top:565px;" width="7" height="4" viewBox="0 0 7 4"><path d="M0 0h7l-3.5 3.5z" fill="#000"/></svg>
<svg class="a" style="left:440px;top:560px;" width="16" height="16" viewBox="0 0 16 16"><path d="M8 1l2 4.8 5 0.4-3.8 3.3 1.2 5-4.4-2.7-4.4 2.7 1.2-5-3.8-3.3 5-0.4z" fill="#fff" stroke="#10208A" stroke-width="1.3"/></svg>
<svg class="a" style="left:461px;top:565px;" width="7" height="4" viewBox="0 0 7 4"><path d="M0 0h7l-3.5 3.5z" fill="#000"/></svg>
<div class="a" style="left:475px;top:560px;width:1px;height:16px;background:#C5C2B2"></div>
<div class="a" style="left:476px;top:560px;width:1px;height:16px;background:#fff"></div>
<svg class="a" style="left:483px;top:561px;" width="16" height="15" viewBox="0 0 16 15"><path d="M2 13V6L6 2h7L8 7l5 6z" fill="none" stroke="#202020"/><g fill="#2040E0"><circle cx="2" cy="13" r="1.5"/><circle cx="2" cy="6" r="1.5"/><circle cx="6" cy="2" r="1.5"/><circle cx="13" cy="2" r="1.5"/><circle cx="8" cy="7" r="1.5"/><circle cx="13" cy="13" r="1.5"/></g></svg>
<svg class="a" style="left:508px;top:560px;" width="14" height="15" viewBox="0 0 14 15"><path d="M3 10l7-8 3 3-8 7z" fill="#F0E040" stroke="#404020"/><path d="M4 11l-2 2" stroke="#404020"/><circle cx="2" cy="13" r="1.6" fill="#2040E0"/></svg>
<div class="a" style="left:529px;top:560px;width:1px;height:16px;background:#C5C2B2"></div>
<div class="a" style="left:530px;top:560px;width:1px;height:16px;background:#fff"></div>
<svg class="a" style="left:537px;top:559px;" width="15" height="16" viewBox="0 0 15 16"><path d="M5 4q2.5-4 5 0" stroke="#303030" fill="none"/><rect x="0.5" y="4.5" width="14" height="11" fill="#3060D0" stroke="#606060"/><rect x="2" y="6" width="11" height="8" fill="#F0E040"/><text x="4" y="13.5" font-family="Liberation Sans" font-weight="bold" font-size="8.5" fill="#000">A</text><path d="M0.5 15.5h14" stroke="#909090"/></svg>
<svg class="a" style="left:559px;top:560px;" width="16" height="15" viewBox="0 0 16 15"><rect x="0.5" y="4" width="7" height="7" fill="#E02020"/><circle cx="11" cy="4.5" r="4" fill="#F8D820"/><path d="M9 5.5l6 8.5h-12z" fill="#2050E0"/></svg>
<svg class="a" style="left:582px;top:559px;" width="16" height="16" viewBox="0 0 16 16"><path d="M5 4q3-4 6 0" stroke="#303030" fill="none"/><rect x="0.75" y="4.75" width="14.5" height="10.5" fill="#F8E8A0" stroke="#101010" stroke-width="1.5"/><rect x="2.5" y="6.5" width="11" height="7" fill="#fff"/><path d="M5 12v-3l3-2 3 2v3" stroke="#E02020" stroke-width="1.3" fill="none"/><path d="M2.5 6.5h11" stroke="#30A040"/></svg>
<div class="a" style="left:604px;top:560px;width:1px;height:16px;background:#C5C2B2"></div>
<div class="a" style="left:605px;top:560px;width:1px;height:16px;background:#fff"></div>
<svg class="a" style="left:609px;top:560px;" width="17" height="15" viewBox="0 0 17 15"><path d="M12.5 4.5A6 6 0 1 0 13.5 10" stroke="#10208A" stroke-width="2" fill="none"/><path d="M9 5h6v-5z" fill="#10208A"/></svg>
<svg class="a" style="left:632px;top:565px;" width="7" height="4" viewBox="0 0 7 4"><path d="M0 0h7l-3.5 3.5z" fill="#000"/></svg>
<svg class="a" style="left:645px;top:560px;" width="15" height="16" viewBox="0 0 15 16"><rect x="0.5" y="0.5" width="14" height="15" fill="#fff" stroke="#808080"/><rect x="2.5" y="5.5" width="3" height="5" fill="#fff" stroke="#2040E0"/><path d="M7 8h6M7 8l2-2M7 8l2 2" stroke="#E02020" fill="none"/><path d="M0.5 0.5v15" stroke="#20C040"/></svg>
<svg class="a" style="left:666px;top:565px;" width="7" height="4" viewBox="0 0 7 4"><path d="M0 0h7l-3.5 3.5z" fill="#000"/></svg>
<svg class="a" style="left:680px;top:559px;" width="15" height="15" viewBox="0 0 15 15"><rect x="5.5" y="0.5" width="8" height="6" fill="#9060E0" stroke="#202020"/><rect x="0.5" y="3.5" width="9" height="10" fill="#F8E860" stroke="#202020"/></svg>
<svg class="a" style="left:700px;top:565px;" width="7" height="4" viewBox="0 0 7 4"><path d="M0 0h7l-3.5 3.5z" fill="#000"/></svg>
<div class="a" style="left:714px;top:560px;width:1px;height:16px;background:#C5C2B2"></div>
<div class="a" style="left:715px;top:560px;width:1px;height:16px;background:#fff"></div>
<svg class="a" style="left:720px;top:560px;" width="18" height="16" viewBox="0 0 18 16"><rect x="1" y="0.5" width="7" height="6" fill="#A0A098" stroke="#808078"/><rect x="8" y="8" width="8" height="7" fill="#C8C8C0" stroke="#808078"/><path d="M4 7v4h4" stroke="#40A040" fill="none"/></svg>
<div class="a" style="left:8px;top:584px;width:238px;height:15px;border:1px solid #A0A090;border-right-color:#fff;border-bottom-color:#fff;background:#ECE9D8"></div>
<div class="a" style="left:249px;top:584px;width:101px;height:15px;border:1px solid #A0A090;border-right-color:#fff;border-bottom-color:#fff;background:#ECE9D8"></div>
<div class="t" style="left:273px;top:586px;width:77px;text-align:left;letter-spacing:-0.45px">13,67 / 15,45</div>
<div class="a" style="left:351px;top:584px;width:97px;height:15px;border:1px solid #A0A090;border-right-color:#fff;border-bottom-color:#fff;background:#ECE9D8"></div>
<div class="t" style="left:371px;top:586px;width:77px;text-align:left;letter-spacing:-0.45px">0,00 x 0,00</div>
<div class="a" style="left:452px;top:584px;width:41px;height:15px;border:1px solid #A0A090;border-right-color:#fff;border-bottom-color:#fff;background:#ECE9D8"></div>
<div class="t" style="left:452px;top:586px;width:41px;text-align:center;letter-spacing:-0.45px">38%</div>
<div class="a" style="left:497px;top:584px;width:21px;height:15px;border:1px solid #A0A090;border-right-color:#fff;border-bottom-color:#fff;background:#ECE9D8"></div>
<div class="t" style="left:497px;top:586px;width:21px;text-align:center;letter-spacing:-0.45px">*</div>
<div class="a" style="left:521px;top:584px;width:23px;height:15px;border:1px solid #A0A090;border-right-color:#fff;border-bottom-color:#fff;background:#ECE9D8"></div>
<div class="a" style="left:548px;top:584px;width:122px;height:15px;border:1px solid #A0A090;border-right-color:#fff;border-bottom-color:#fff;background:#ECE9D8"></div>
<div class="t" style="left:551px;top:586px;width:119px;text-align:left;letter-spacing:-0.45px">Seite 1 / 1</div>
<div class="a" style="left:674px;top:584px;width:118px;height:15px;border:1px solid #A0A090;border-right-color:#fff;border-bottom-color:#fff;background:#ECE9D8"></div>
<div class="t" style="left:677px;top:586px;width:115px;text-align:left;letter-spacing:-0.45px">Standard</div>
<svg class="a" style="left:255px;top:585px;" width="15" height="12" viewBox="0 0 15 12"><path d="M3.5 0v8M0 4h8" stroke="#1020C0"/><rect x="9" y="3.5" width="1.2" height="1.2" fill="#000"/><rect x="11" y="3.5" width="1.2" height="1.2" fill="#000"/><rect x="13" y="3.5" width="1.2" height="1.2" fill="#000"/><rect x="13" y="5.5" width="1.2" height="1.2" fill="#000"/><rect x="13" y="7.5" width="1.2" height="1.2" fill="#000"/><rect x="3" y="9.5" width="1.2" height="1.2" fill="#000"/><rect x="5" y="9.5" width="1.2" height="1.2" fill="#000"/><rect x="7" y="9.5" width="1.2" height="1.2" fill="#000"/><rect x="9" y="9.5" width="1.2" height="1.2" fill="#000"/><rect x="11" y="9.5" width="1.2" height="1.2" fill="#000"/><rect x="13" y="9.5" width="1.2" height="1.2" fill="#000"/></svg>
<svg class="a" style="left:348px;top:585px;" width="20" height="12" viewBox="0 0 20 12"><rect x="9.5" y="0" width="3" height="3" fill="#000"/><rect x="15.5" y="0" width="3" height="3" fill="#000"/><path d="M7.5 4.5q-2 1 0 2M7.5 8.5q-2 1 0 2" stroke="#000" stroke-width="1.3" fill="none"/><rect x="10" y="4" width="1.2" height="1.2" fill="#000"/><rect x="10" y="10" width="1.2" height="1.2" fill="#000"/><rect x="12" y="4" width="1.2" height="1.2" fill="#000"/><rect x="12" y="10" width="1.2" height="1.2" fill="#000"/><rect x="14" y="4" width="1.2" height="1.2" fill="#000"/><rect x="14" y="10" width="1.2" height="1.2" fill="#000"/><rect x="16" y="4" width="1.2" height="1.2" fill="#000"/><rect x="16" y="10" width="1.2" height="1.2" fill="#000"/><rect x="18" y="4" width="1.2" height="1.2" fill="#000"/><rect x="18" y="10" width="1.2" height="1.2" fill="#000"/><rect x="10" y="6" width="1.2" height="1.2" fill="#000"/><rect x="18" y="6" width="1.3" height="1.2" fill="#000"/><rect x="10" y="8" width="1.2" height="1.2" fill="#000"/><rect x="18" y="8" width="1.3" height="1.2" fill="#000"/></svg>
</body></html>
